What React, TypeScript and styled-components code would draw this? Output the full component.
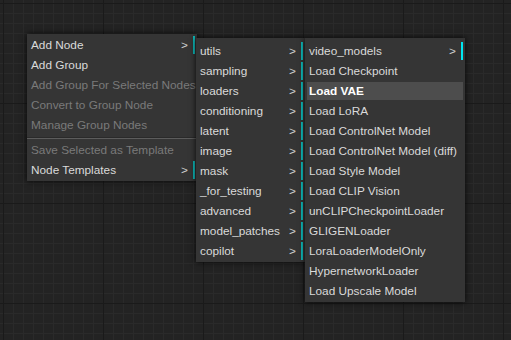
import styled, { createGlobalStyle } from 'styled-components';

const GlobalStyle = createGlobalStyle`
    html, body {
        margin: 0;
        padding: 0;
        background: #222;
    }
`;

// Canvas with the node-graph grid
const Canvas = styled.div`
    position: relative;
    width: 511px;
    height: 340px;
    overflow: hidden;
    background-color: #232323;
    background-image:
        linear-gradient(to right, #1a1a1a 1px, transparent 1px),
        linear-gradient(to bottom, #1a1a1a 1px, transparent 1px),
        linear-gradient(to right, #2a2a2a 1px, transparent 1px),
        linear-gradient(to bottom, #2a2a2a 1px, transparent 1px);
    background-size: 100px 100px, 100px 100px, 10px 10px, 10px 10px;
    background-position: 3px 0, 0 3px, 3px 0, 0 3px;
    font-family: "Liberation Sans", Arial, sans-serif;
`;

const Menu = styled.div<{ $left: number; $top: number; $width: number; $padTop: number }>`
    position: absolute;
    left: ${(p) => p.$left}px;
    top: ${(p) => p.$top}px;
    width: ${(p) => p.$width}px;
    padding: ${(p) => p.$padTop}px 0 2px;
    background-color: #353535;
    box-shadow: 0 0 6px rgba(0, 0, 0, 0.85);
    display: flex;
    flex-direction: column;
    gap: 2px;
`;

const Entry = styled.div<{ $disabled?: boolean; $hover?: boolean; $submenu?: boolean; $bright?: boolean }>`
    position: relative;
    height: 18px;
    line-height: 18px;
    margin: 0 2px;
    padding: 0 2px;
    font-size: 11.8px;
    white-space: nowrap;
    color: ${(p) => (p.$disabled ? '#7a7a7a' : p.$hover ? '#fff' : '#dadada')};
    font-weight: ${(p) => (p.$hover ? 'bold' : 'normal')};
    background: ${(p) => (p.$hover ? '#4d4d4d' : 'transparent')};
    border-right: ${(p) => (p.$submenu ? `2px solid ${p.$bright ? '#00e6f0' : '#0fb8b8'}` : '2px solid transparent')};

    &::after {
        content: ${(p) => (p.$submenu ? '">"' : 'none')};
        position: absolute;
        right: 5px;
        top: 0;
        color: #cfcfcf;
    }
`;

const Separator = styled.div`
    height: 0;
    margin: 1px 0 0;
    border-top: 1px solid #2a2a2a;
    border-bottom: 1px solid #5c5c5c;
`;

type Item = { label: string; disabled?: boolean; submenu?: boolean; hover?: boolean; bright?: boolean };

const categories: Item[] = [
    'utils', 'sampling', 'loaders', 'conditioning', 'latent', 'image', 'mask',
    '_for_testing', 'advanced', 'model_patches', 'copilot',
].map((label) => ({ label, submenu: true }));

const loaders: Item[] = [
    { label: 'video_models', submenu: true, bright: true },
    { label: 'Load Checkpoint' },
    { label: 'Load VAE', hover: true },
    { label: 'Load LoRA' },
    { label: 'Load ControlNet Model' },
    { label: 'Load ControlNet Model (diff)' },
    { label: 'Load Style Model' },
    { label: 'Load CLIP Vision' },
    { label: 'unCLIPCheckpointLoader' },
    { label: 'GLIGENLoader' },
    { label: 'LoraLoaderModelOnly' },
    { label: 'HypernetworkLoader' },
    { label: 'Load Upscale Model' },
];

function renderItems(items: Item[]) {
    return items.map((it) => (
        <Entry
            key={it.label}
            $disabled={it.disabled}
            $submenu={it.submenu}
            $hover={it.hover}
            $bright={it.bright}
        >
            {it.label}
        </Entry>
    ));
}

export default function App() {
    return (
        <>
            <GlobalStyle />
            <Canvas>
                <Menu $left={27} $top={34} $width={170} $padTop={2}>
                    <Entry $submenu>Add Node</Entry>
                    <Entry>Add Group</Entry>
                    <Entry $disabled>Add Group For Selected Nodes</Entry>
                    <Entry $disabled>Convert to Group Node</Entry>
                    <Entry $disabled>Manage Group Nodes</Entry>
                    <Separator />
                    <Entry $disabled>Save Selected as Template</Entry>
                    <Entry $submenu>Node Templates</Entry>
                </Menu>
                <Menu $left={196} $top={38} $width={109} $padTop={4}>
                    {renderItems(categories)}
                </Menu>
                <Menu $left={305} $top={38} $width={160} $padTop={4}>
                    {renderItems(loaders)}
                </Menu>
            </Canvas>
        </>
    );
}
